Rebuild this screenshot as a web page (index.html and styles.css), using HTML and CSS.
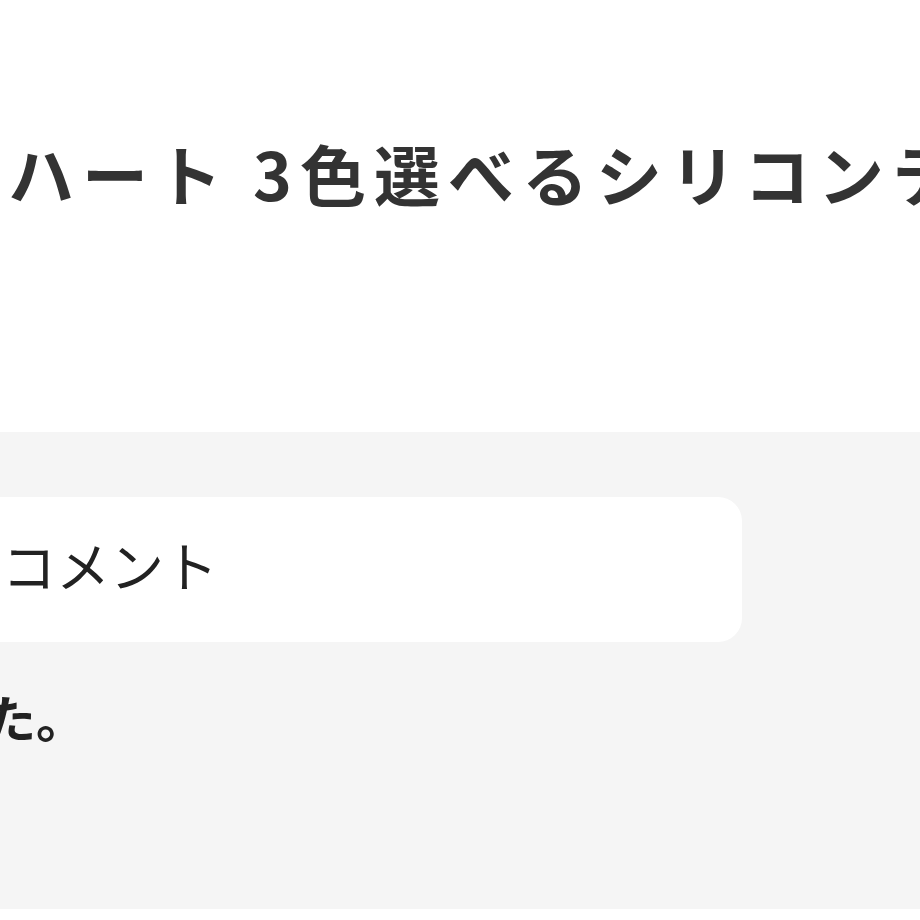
FILE: index.html
```html
<!DOCTYPE html>
<html lang="ja">
<head>
    <meta charset="UTF-8">
    <meta name="viewport" content="width=device-width, initial-scale=1.0">
    <title>ハート 3色選べるシリコンテープ</title>
    <link rel="stylesheet" href="styles.css">
</head>
<body>
    <header class="product-head">
        <h1 class="product-title">ハート 3色選べるシリコンテープ</h1>
    </header>

    <section class="review-area">
        <div class="review-card">
            <span class="review-label">コメント</span>
        </div>
        <div class="review-body">
            <p class="review-text">とても可愛くて気に入りました。</p>
        </div>
    </section>
</body>
</html>
```

FILE: styles.css
```css
* {
    margin: 0;
    padding: 0;
    box-sizing: border-box;
}

body {
    font-family: "Noto Sans CJK JP", "Noto Sans", sans-serif;
    background: #fff;
    color: #222;
    overflow: hidden;
}

.product-head {
    height: 432px;
    padding-top: 124px;
    padding-left: 8px;
}

.product-title {
    font-size: 66px;
    line-height: 96px;
    font-weight: 700;
    letter-spacing: 8px;
    color: #333;
    white-space: nowrap;
}

.review-area {
    height: 477px;
    background: #f5f5f5;
    padding-top: 65px;
}

.review-card {
    width: 782px;
    height: 145px;
    margin-left: -40px;
    padding-left: 42px;
    padding-bottom: 10px;
    background: #fff;
    border-radius: 24px;
    display: flex;
    align-items: center;
}

.review-label {
    font-size: 54px;
    line-height: 1;
    color: #222;
}

.review-body {
    width: 86px;
    margin-top: 44px;
    display: flex;
    justify-content: flex-end;
}

.review-text {
    font-size: 50px;
    line-height: 60px;
    font-weight: 700;
    color: #222;
    white-space: nowrap;
    flex-shrink: 0;
}
```
